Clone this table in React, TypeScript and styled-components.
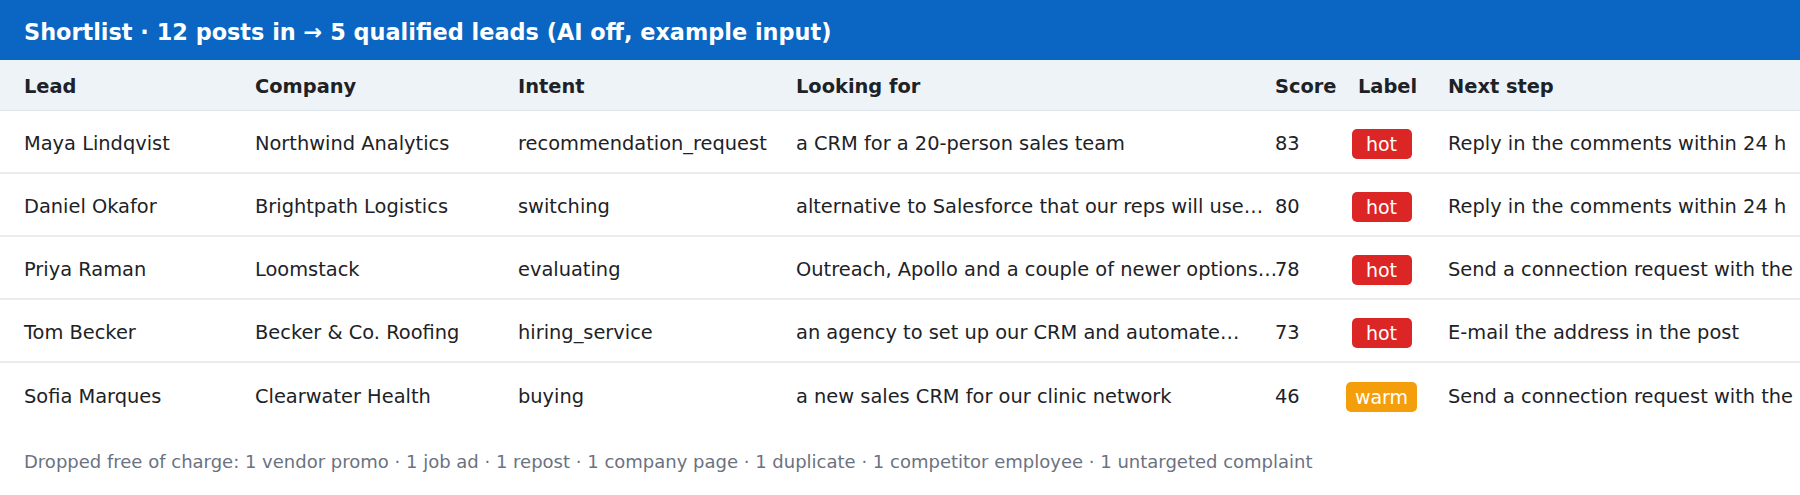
import styled, { createGlobalStyle } from "styled-components";

type Lead = {
    name: string;
    company: string;
    intent: string;
    lookingFor: string;
    score: number;
    label: "hot" | "warm";
    next: string;
};

const leads: Lead[] = [
    { name: "Maya Lindqvist", company: "Northwind Analytics", intent: "recommendation_request", lookingFor: "a CRM for a 20-person sales team", score: 83, label: "hot", next: "Reply in the comments within 24 h" },
    { name: "Daniel Okafor", company: "Brightpath Logistics", intent: "switching", lookingFor: "alternative to Salesforce that our reps will use…", score: 80, label: "hot", next: "Reply in the comments within 24 h" },
    { name: "Priya Raman", company: "Loomstack", intent: "evaluating", lookingFor: "Outreach, Apollo and a couple of newer options…", score: 78, label: "hot", next: "Send a connection request with the post as context" },
    { name: "Tom Becker", company: "Becker & Co. Roofing", intent: "hiring_service", lookingFor: "an agency to set up our CRM and automate…", score: 73, label: "hot", next: "E-mail the address in the post" },
    { name: "Sofia Marques", company: "Clearwater Health", intent: "buying", lookingFor: "a new sales CRM for our clinic network", score: 46, label: "warm", next: "Send a connection request with the post as context" },
];

const GlobalStyle = createGlobalStyle`
    html, body {
        margin: 0;
        padding: 0;
        background: #ffffff;
        overflow: hidden;
    }
    body {
        font-family: "DejaVu Sans", "Noto Sans", sans-serif;
        color: #1d2226;
    }
`;

const Panel = styled.div`
    width: 1800px;
    overflow: hidden;
`;

const TitleBar = styled.div`
    box-sizing: border-box;
    height: 60px;
    display: flex;
    align-items: center;
    padding: 4px 24px 0;
    background: #0a66c2;
    color: #ffffff;
    font-size: 22.4px;
    font-weight: 700;
    white-space: nowrap;
`;

const Row = styled.div<{ $head?: boolean; $last?: boolean }>`
    box-sizing: border-box;
    display: grid;
    grid-template-columns: 231px 263px 278px 479px 71px 102px max-content;
    align-items: center;
    padding: ${(p) => (p.$head ? "2px" : "4.6px")} 0 0 24px;
    height: ${(p) => (p.$head ? "51px" : "63px")};
    background: ${(p) => (p.$head ? "#eef3f8" : "#ffffff")};
    border-bottom: ${(p) => (p.$head ? "1px solid #dfe5ec" : p.$last ? "none" : "2px solid #e9ebee")};
    font-size: 19.4px;
    font-weight: ${(p) => (p.$head ? 700 : 400)};
    white-space: nowrap;
`;

const Cell = styled.div`
    white-space: nowrap;
`;

const HeadLabel = styled.div`
    padding-left: 12px;
`;

const LabelCell = styled.div`
    display: flex;
    justify-content: center;
    padding-right: 31px;
`;

const Badge = styled.span<{ $tone: "hot" | "warm" }>`
    box-sizing: border-box;
    display: inline-flex;
    align-items: center;
    justify-content: center;
    min-width: 60px;
    height: 30px;
    padding: 0 9px;
    border-radius: 5px;
    background: ${(p) => (p.$tone === "hot" ? "#dc2626" : "#f59e0b")};
    color: #ffffff;
    font-size: 19px;
`;

const Footnote = styled.div`
    padding: 23px 24px;
    font-size: 18px;
    line-height: 26px;
    color: #6b7280;
    white-space: nowrap;
`;

export default function App() {
    return (
        <Panel>
            <GlobalStyle />
            <TitleBar>Shortlist · 12 posts in → 5 qualified leads (AI off, example input)</TitleBar>
            <Row $head>
                <Cell>Lead</Cell>
                <Cell>Company</Cell>
                <Cell>Intent</Cell>
                <Cell>Looking for</Cell>
                <Cell>Score</Cell>
                <HeadLabel>Label</HeadLabel>
                <Cell>Next step</Cell>
            </Row>
            {leads.map((l, i) => (
                <Row key={l.name} $last={i === leads.length - 1}>
                    <Cell>{l.name}</Cell>
                    <Cell>{l.company}</Cell>
                    <Cell>{l.intent}</Cell>
                    <Cell>{l.lookingFor}</Cell>
                    <Cell>{l.score}</Cell>
                    <LabelCell>
                        <Badge $tone={l.label}>{l.label}</Badge>
                    </LabelCell>
                    <Cell>{l.next}</Cell>
                </Row>
            ))}
            <Footnote>
                Dropped free of charge: 1 vendor promo · 1 job ad · 1 repost · 1 company page · 1 duplicate · 1 competitor employee · 1 untargeted complaint
            </Footnote>
        </Panel>
    );
}
